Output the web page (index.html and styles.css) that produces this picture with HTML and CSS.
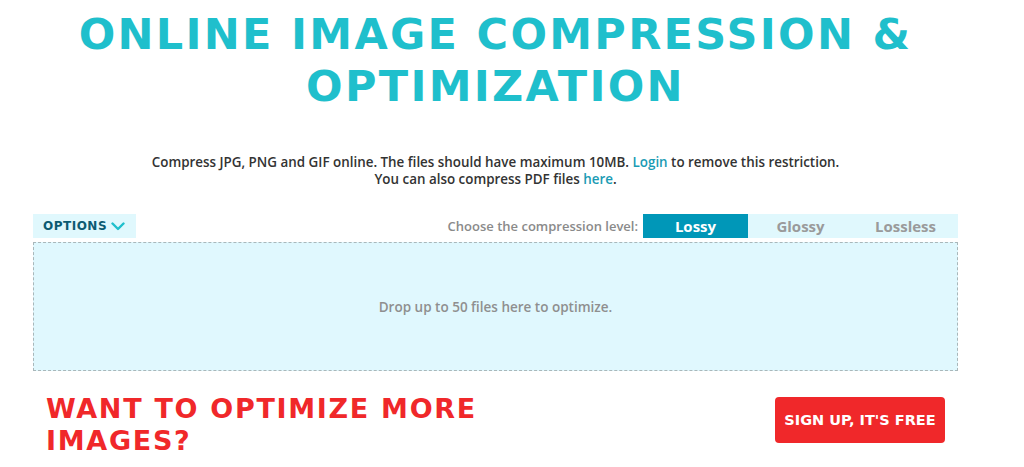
FILE: index.html
```html
<!DOCTYPE html>
<html lang="en">
<head>
    <meta charset="UTF-8">
    <meta name="viewport" content="width=device-width, initial-scale=1.0">
    <title>Online Image Compression &amp; Optimization</title>
    <link rel="stylesheet" href="styles.css">
</head>
<body>
    <div class="page">
        <h1 class="title">Online image compression &amp; optimization</h1>

        <p class="intro">
            Compress JPG, PNG and GIF online. The files should have maximum 10MB. <a href="#">Login</a> to remove this restriction.<br>
            You can also compress PDF files <a href="#">here</a>.
        </p>

        <div class="toolbar">
            <div class="options">
                OPTIONS
                <svg class="chevron" width="14" height="9" viewBox="0 0 14 9">
                    <path d="M1.5 1.5 L7 7 L12.5 1.5" fill="none" stroke="#1fbfcc" stroke-width="2.4" stroke-linecap="round" stroke-linejoin="round"/>
                </svg>
            </div>
            <div class="levels">
                <span class="levels-label">Choose the compression level:</span>
                <button class="level active">Lossy</button>
                <button class="level">Glossy</button>
                <button class="level">Lossless</button>
            </div>
        </div>

        <div class="dropzone">Drop up to 50 files here to optimize.</div>

        <div class="promo">
            <h2 class="promo-title">Want to optimize more images?</h2>
            <button class="signup">SIGN UP, IT'S FREE</button>
        </div>
    </div>
</body>
</html>
```

FILE: styles.css
```css
body {
    margin: 0;
    background: #fff;
    font-family: "Open Sans", "Liberation Sans", sans-serif;
    color: #333;
}
.page {
    width: 925px;
    margin-left: 33px;
}
.title {
    margin: 8px 0 0;
    text-align: center;
    text-transform: uppercase;
    font-family: "DejaVu Sans", sans-serif;
    font-weight: bold;
    font-size: 43px;
    line-height: 52px;
    letter-spacing: 2.3px;
    color: #1fbfcc;
}
.intro {
    margin: 42px 0 0;
    text-align: center;
    font-size: 13.4px;
    font-weight: 600;
    line-height: 17px;
}
.intro a {
    color: #1a9bb4;
    text-decoration: none;
}
.toolbar {
    display: flex;
    justify-content: space-between;
    align-items: center;
    margin-top: 26px;
    height: 24px;
}
.options {
    display: flex;
    align-items: center;
    gap: 4px;
    height: 24px;
    padding: 0 11px 0 10px;
    background: #e0f8fd;
    color: #0c5b72;
    font-family: "DejaVu Sans", sans-serif;
    font-weight: bold;
    font-size: 12px;
    letter-spacing: 0.5px;
}
.levels {
    display: flex;
    align-items: center;
    height: 24px;
}
.levels-label {
    margin-right: 5px;
    color: #8a8a8a;
    font-size: 13px;
    font-weight: 600;
}
.level {
    width: 105px;
    height: 24px;
    border: none;
    padding: 0;
    background: #e0f8fd;
    color: #9a9a9a;
    font-family: "Open Sans", "Liberation Sans", sans-serif;
    font-size: 15px;
    font-weight: 700;
    cursor: pointer;
}
.level.active {
    background: #0097b8;
    color: #fff;
}
.dropzone {
    display: flex;
    align-items: center;
    justify-content: center;
    margin-top: 4px;
    height: 127px;
    border: 1px dashed #a9b7ba;
    background: #e0f8fe;
    color: #8f8f8f;
    font-size: 13.5px;
    font-weight: 600;
}
.promo {
    display: flex;
    justify-content: space-between;
    align-items: flex-start;
    padding: 22px 13px 0 13px;
}
.promo-title {
    margin: 0;
    width: 450px;
    text-transform: uppercase;
    font-family: "DejaVu Sans", sans-serif;
    font-weight: bold;
    font-size: 27px;
    line-height: 32px;
    letter-spacing: 1.7px;
    color: #f0282a;
}
.signup {
    margin-top: 4px;
    width: 170px;
    height: 46px;
    border: none;
    border-radius: 4px;
    background: #f0282a;
    color: #fff;
    font-family: "DejaVu Sans", sans-serif;
    font-weight: bold;
    font-size: 14.5px;
    cursor: pointer;
}
```
